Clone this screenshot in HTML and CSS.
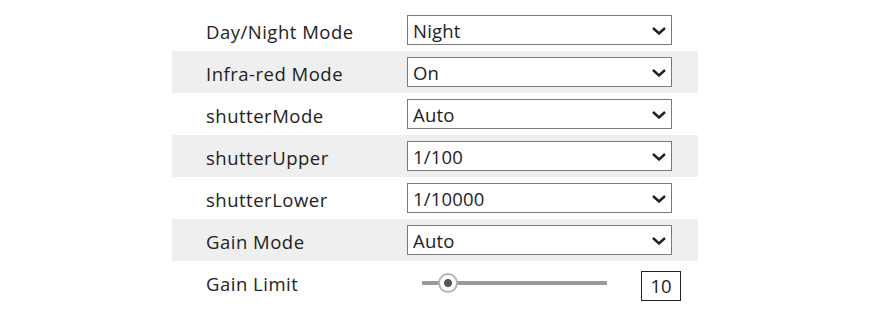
FILE: index.html
```html
<!DOCTYPE html>
<html lang="en">
<head>
  <meta charset="UTF-8" />
  <title>Image Settings</title>
  <link rel="stylesheet" href="styles.css">
</head>
<body>
  <div class="panel">
    <div class="row">
      <span class="label">Day/Night Mode</span>
      <div class="select"><span>Night</span><svg class="chev" viewBox="0 0 14 8"><path d="M1 1 L7 6.5 L13 1" /></svg></div>
    </div>
    <div class="row alt">
      <span class="label">Infra-red Mode</span>
      <div class="select"><span>On</span><svg class="chev" viewBox="0 0 14 8"><path d="M1 1 L7 6.5 L13 1" /></svg></div>
    </div>
    <div class="row">
      <span class="label">shutterMode</span>
      <div class="select"><span>Auto</span><svg class="chev" viewBox="0 0 14 8"><path d="M1 1 L7 6.5 L13 1" /></svg></div>
    </div>
    <div class="row alt">
      <span class="label">shutterUpper</span>
      <div class="select"><span>1/100</span><svg class="chev" viewBox="0 0 14 8"><path d="M1 1 L7 6.5 L13 1" /></svg></div>
    </div>
    <div class="row">
      <span class="label">shutterLower</span>
      <div class="select"><span>1/10000</span><svg class="chev" viewBox="0 0 14 8"><path d="M1 1 L7 6.5 L13 1" /></svg></div>
    </div>
    <div class="row alt">
      <span class="label">Gain Mode</span>
      <div class="select"><span>Auto</span><svg class="chev" viewBox="0 0 14 8"><path d="M1 1 L7 6.5 L13 1" /></svg></div>
    </div>
    <div class="row">
      <span class="label">Gain Limit</span>
      <div class="slider">
        <div class="track">
          <span class="thumb" style="left: 14%;"></span>
        </div>
        <span class="value">10</span>
      </div>
    </div>
  </div>
</body>
</html>
```

FILE: styles.css
```css
body {
  margin: 0;
  background: #fff;
  font-family: "Open Sans", "Noto Sans", sans-serif;
  color: #222;
}
.panel {
  width: 526px;
  margin: 9px 0 0 172px;
}
.row {
  height: 42px;
  display: flex;
  align-items: center;
}
.row.alt {
  background: #efefef;
}
.label {
  box-sizing: border-box;
  flex: none;
  width: 235px;
  padding: 2px 0 0 34px;
  font-size: 18.5px;
  letter-spacing: 0.5px;
}
.select {
  box-sizing: border-box;
  width: 265px;
  height: 30px;
  border: 1.5px solid #7a7a7a;
  background: #fff;
  display: flex;
  align-items: center;
  justify-content: space-between;
  padding: 1px 5px 0 5px;
  font-size: 18.5px;
  letter-spacing: 0.2px;
}
.chev {
  width: 14px;
  height: 8px;
  fill: none;
  stroke: #1e1e1e;
  stroke-width: 2.4;
}
.slider {
  display: flex;
  align-items: center;
}
.track {
  position: relative;
  width: 185px;
  height: 4px;
  background: #9a9a9a;
  margin: 2px 0 0 15px;
  border-radius: 1px;
}
.thumb {
  position: absolute;
  top: 50%;
  width: 16px;
  height: 16px;
  margin: -10px 0 0 -10px;
  border-radius: 50%;
  background: radial-gradient(circle, #555 0 3.5px, #fff 4.5px);
  border: 2px solid #b5b5b5;
}
.value {
  box-sizing: border-box;
  width: 40px;
  height: 30px;
  margin: 7px 0 0 34px;
  border: 1.5px solid #222;
  display: flex;
  align-items: center;
  justify-content: center;
  font-size: 18.5px;
}
```
